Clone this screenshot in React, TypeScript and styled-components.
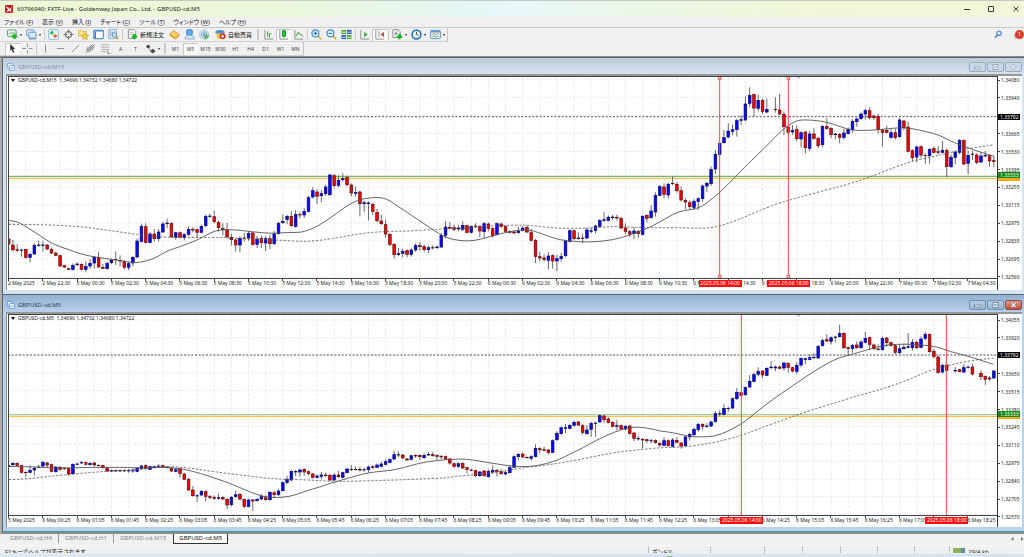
import React from "react";
import styled, { createGlobalStyle, css } from "styled-components";

/* ---------- chart data ---------- */

type Bar = { i: number; up: boolean; top: number; bottom: number; high: number; low: number };
type Point = [number, number];

const STEP = 12.85;
const PLOT_WIDTH = 2967;

/** Each record is "direction bodyTop bodyBottom high low"; "-" is a gap in trading. */
function readBars(first: number, base: number, text: string): Bar[] {
  const bars: Bar[] = [];
  text
    .trim()
    .split(/\s*,\s*/)
    .forEach((record, n) => {
      if (record === "-") return;
      const [dir, top, bottom, high, low] = record.split(" ");
      bars.push({
        i: first + n,
        up: dir === "b",
        top: Number(top) + base,
        bottom: Number(bottom) + base,
        high: Number(high) + base,
        low: Number(low) + base,
      });
    });
  return bars;
}

function readLine(dx: number, dy: number, text: string): Point[] {
  return text
    .trim()
    .split(/\s+/)
    .map((pair) => {
      const [x, y] = pair.split(",").map(Number);
      return [x + dx, y + dy] as Point;
    });
}

const m15Bars: Bar[] = [
  ...readBars(0, 372, `r 116 133 84 150, r 134 150 120 155, r 148 152 132 156, b 149 152 147 170, r 147 173 146 176, b 162 173 158 187, b 135 163 130 165, b 134 137 122 141, b 134 137 122 154, r 134 148 132 151, r 147 160 143 162, r 158 167 156 169, r 166 199 164 201, r 196 202 194 204, r 205 209 203 210, b 195 209 190 212, b 191 195 187 199, r 192 209 190 211, b 198 209 184 217, b 189 199 178 206, b 171 190 168 205, r 171 202 155 204, r 201 206 192 208, b 189 207 186 209, b 179 189 176 192, r 177 180 154 195, r 180 184 166 200, r 184 203 180 208, b 190 203 185 210, b 171 190 168 199, b 122 172 115 174, b 78 125 71 127, r 79 128 70 130, b 101 128 97 130, r 101 117 87 124, b 95 117 87 124, b 71 97 66 99, b 68 72 56 84, r 69 111 67 114, b 97 112 95 119, r 97 112 95 116, b 103 113 100 121, b 87 104 79 107, r 87 91 82 97, r 88 98 86 112, b 78 98 74 100, b 48 78 44 82, b 47 50 41 54, r 49 66 32 70, r 66 84 63 95, r 84 90 70 106, r 89 111 69 116, r 111 120 101 136, r 119 136 116 155, b 114 136 108 157, r 113 116 99 124, b 99 115 93 122, r 98 134 96 137, b 116 134 108 144, r 114 129 106 145, b 115 130 108 153, r 115 132 104 147, b 101 132 93 135, b 69 102 66 104, b 63 69 43 72, b 48 59 45 73, r 48 78 33 80, b 42 80 30 83, r 43 46 37 55, b 33 46 25 54, b -8 35 -12 37, b -29 -8 -38 -4, r -25 -10 -32 12, b -20 -12 -30 7, b -40 -18 -46 -12`),
  ...readBars(75, 252, `b 44 105 42 108, r 46 78 42 84, b 60 77 46 82, b 55 60 40 65, r 51 75 47 80, r 74 100 70 109, b 96 101 80 110, r 95 132 92 169, b 127 132 122 157, b 128 132 124 181, r 132 155 129 165, r 156 183 147 187, r 182 192 165 195, r 193 223 178 233, r 222 254 219 258, r 252 285 249 296, b 280 285 264 288, b 273 281 267 292, r 271 284 268 292, b 269 284 264 290, b 255 271 250 275, r 255 261 246 272, r 259 270 253 275, b 262 270 259 279, r 262 265 256 268, b 260 264 257 267, b 225 262 219 264, b 200 227 183 235, r 201 205 186 208, r 202 209 194 213, b 203 208 194 214, b 195 209 184 213, r 196 218 194 220, b 198 218 196 221, r 197 200 190 204, r 199 214 196 232, b 190 216 186 235, r 191 206 188 213, r 205 227 202 232, b 190 224 187 226, r 191 200 188 203, r 199 215 196 218, r 214 218 211 220, r 215 220 210 222, b 212 219 200 221, b 203 212 198 214, r 201 217 196 219, r 217 242 207 244, r 240 290 237 309, r 289 295 276 304, r 293 299 284 305, b 287 302 276 328, r 286 304 283 326, b 295 304 285 334, b 288 297 279 305, b 242 288 239 292, b 211 245 209 247, r 211 237 209 240, b 233 237 217 239, r 233 236 221 249, b 209 235 203 238, b 211 215 203 220, b 197 212 194 220, b 180 200 178 202, b 178 182 156 186, b 171 182 166 184, b 170 174 164 180, r 171 175 164 182, r 174 205 171 208, r 203 215 190 222, r 214 223 211 232, b 212 222 202 237, r 213 222 210 234, b 168 224 165 226, r 165 176 163 187, b 152 174 136 176, b 105 157 97 170, b 79 107 75 109, r 80 104 70 115, b 72 106 68 115, r 69 72 50 76, r 72 93 66 98, r 91 121 80 124, r 120 127 115 147, r 127 141 122 149, b 123 143 118 149, b 115 125 112 150, b 77 117 74 125, b 69 79 66 96, b 27 72 20 77`),
  ...readBars(165, -18, `b 252 298 240 312, b 219 254 216 256, b 202 219 180 221, b 182 202 160 205, b 178 185 164 196, b 151 180 146 200, b 148 152 136 165, b 101 151 79 153, b 75 101 52 111, r 73 115 71 139, b 90 116 74 124, r 90 125 86 132, b 117 127 86 130, -, r 117 120 82 128, r 119 133 72 135, r 132 171 124 196, r 170 188 165 192, b 180 187 165 194, r 178 207 166 214, b 187 208 184 232, r 185 234 183 251, b 191 236 183 243, r 191 206 175 209, r 204 228 201 234, b 168 225 165 231, r 168 176 145 180, r 174 195 172 204, b 191 195 189 208, r 192 203 189 220, b 188 203 176 209, b 177 191 172 194, b 153 180 148 188, b 146 156 142 170, b 131 147 127 150, b 121 133 117 148, r 121 144 112 148, r 137 144 134 150, r 138 180 131 189, r 179 188 177 230, r 180 188 167 190, b 187 203 177 207, r 187 204 176 209, b 149 201 144 203, r 152 174 150 181, r 170 245 155 247, r 241 264 238 274, b 230 262 226 276, r 229 256 226 263, r 255 258 250 281, b 237 258 235 281, r 235 248 230 250, r 244 248 228 254, b 240 248 213 250, r 240 291 235 321, b 261 291 254 294, b 245 263 242 283, b 210 248 207 253, r 210 283 208 285, b 255 281 242 313, r 251 254 242 270, r 254 278 250 283, b 257 277 247 279, b 255 259 243 262, r 256 274 254 291, r 271 275 257 292`),
];

const m15Fast: Point[] = [
  ...readLine(-24, 372, "26,61 48,63 70,75 110,100 155,131 200,147 245,163 290,172 335,178 380,185 405,189 440,183 470,172 500,153 540,140 590,121 620,105 645,92 680,88 720,91 790,99 830,100 860,97 905,98 940,85 975,65"),
  ...readLine(966, 252, "20,160 45,141 75,124 105,115 140,112 160,114 180,122 205,140 245,166 280,190 310,210 340,229 370,239 410,244 450,239 500,224 540,215 580,208 610,212 650,227 690,240 730,244 780,247 850,240 900,225 950,206"),
  ...readLine(1956, 252, "0,186 40,162 70,151 110,147 140,130 180,97 230,47"),
  ...readLine(1956, -18, "260,285 315,233 360,186 385,166 410,152 430,149 480,152 520,162 560,177 590,182 650,180 700,174 745,173 800,185 840,196 870,213 910,228 950,243 1000,258"),
];

const m15Slow: Point[] = [
  ...readLine(-24, 372, "26,73 130,74 200,77 260,82 310,89 360,96 410,103 460,110 510,112 560,113 640,112 690,113 740,117 800,119 850,121 910,125 960,121"),
  ...readLine(966, 252, "0,237 60,226 120,217 180,214 240,213 300,209 350,206 400,205 460,199 520,196 590,195 630,199 680,205 760,205 800,203 850,199 910,202 960,203"),
  ...readLine(1956, 252, "0,203 60,203 110,205 150,204 190,195 230,181 270,164 310,147 360,128 400,117 450,103 510,87 560,74 610,58 660,39 710,20"),
  ...readLine(1956, -18, "760,272 820,260 870,248 920,236 970,229 1000,225"),
];

const m5Bars: Bar[] = [
  ...readBars(0, 378, `b 76 81 72 83, b 69 75 66 78, r 69 77 67 79, r 76 98 74 100, r 96 99 94 111, b 90 98 76 100, b 84 91 80 107, b 80 82 74 84, b 66 79 63 82, r 68 76 66 83, r 73 95 71 97, b 80 96 78 98, r 81 89 78 92, r 84 87 82 90, r 85 103 83 107, b 72 102 70 104, b 71 74 67 76, b 67 70 63 72, r 67 74 65 76, b 69 75 67 77, r 68 76 66 79, r 75 78 73 79, r 76 84 74 86, r 83 94 81 96, b 91 94 89 96, r 91 93 88 96, b 91 93 88 96, r 91 93 88 96, b 91 93 88 98, b 91 93 85 98, b 83 95 81 97, b 77 87 75 89, r 76 86 73 89, b 79 89 77 90, b 79 83 77 85, b 77 80 73 82, r 76 80 74 83, r 80 84 78 85, r 84 94 82 96, b 88 95 84 97, r 85 101 83 112, r 101 119 99 121, r 117 151 114 153, r 149 168 138 170, b 166 169 163 186, b 153 166 150 168, r 154 170 151 184, r 169 173 165 177, r 171 176 166 179, b 172 176 161 179, r 171 178 169 180, r 177 196 174 207, b 171 195 168 199, b 163 171 152 175, r 162 178 160 181, r 177 200 176 203, b 179 201 176 202, r 179 184 177 213, b 177 183 174 185, b 169 178 162 180, r 172 180 165 182, b 156 180 154 182, r 157 165 154 174, b 152 165 147 168, b 127 153 124 154, b 117 128 108 132, b 93 121 91 123, b 93 97 90 108, b 89 97 86 110, r 87 97 85 108, r 94 102 92 105, r 101 113 99 115, b 107 113 103 115, b 104 110 96 118, r 104 108 98 110`),
  ...readBars(75, 258, `r 225 241 222 243, b 224 241 220 243, r 224 231 213 233, b 217 233 215 235, b 206 219 204 221, r 207 210 196 213, b 207 210 199 212, r 207 211 200 214, b 208 210 203 215, b 200 210 197 218, r 199 203 196 207, b 194 203 191 204, b 191 200 185 202, b 184 194 178 196, b 178 188 175 190, b 163 178 153 180, b 163 166 154 171, r 164 175 162 176, r 176 181 174 182, b 166 179 165 181, r 165 169 163 174, r 165 171 163 180, b 165 174 160 177, b 162 166 156 168, r 163 168 157 170, r 165 170 163 180, r 168 172 165 178, r 169 178 167 180, r 176 190 174 194, r 190 200 188 203, b 190 200 188 204, r 189 205 187 208, r 202 209 200 220, r 209 212 206 214, r 211 228 209 231, b 215 228 213 230, r 212 228 210 230, b 213 231 208 233, b 210 217 196 222, r 210 215 206 229, r 214 222 207 225, b 217 223 213 226, b 202 219 198 220, b 169 203 166 204, b 162 171 159 181, r 161 172 158 174, r 171 174 169 176, b 169 176 166 182, b 144 171 133 172, r 145 150 142 160, r 148 152 140 154, r 149 158 147 164, b 121 158 118 159, b 99 120 94 123, b 82 102 80 104, b 82 86 72 99, b 75 86 71 88, b 66 77 62 79, r 65 76 63 78, r 76 98 72 104, b 89 102 75 104, b 69 89 65 110, b 68 71 65 110, b 46 67 44 68, r 47 60 45 68, r 56 68 52 70, r 66 80 64 82, b 76 80 60 91, r 76 88 73 90, b 78 88 76 92, r 77 101 75 104, r 98 116 96 124, b 114 118 108 122, r 117 121 114 145, r 118 123 116 130, b 121 123 116 130, r 120 129 118 131, r 129 136 127 140`),
  ...readBars(153, 318, `b 61 77 52 79, r 61 78 58 80, b 59 80 54 82, r 60 68 52 70, r 68 79 66 86, b 50 78 48 80, b 42 52 39 62, b 27 45 23 48`),
  ...readBars(161, -57, `b 387 405 384 411, r 387 395 385 404, b 392 395 384 399, b 380 394 377 396, b 355 380 348 384, b 355 358 346 364, b 339 359 328 361, b 339 342 335 350, b 310 340 307 342, b 291 312 279 315, r 292 302 290 304, b 276 300 274 303, b 258 277 240 279, b 238 260 234 262, b 228 239 217 244, r 227 241 225 249, b 219 242 217 244, b 215 219 198 223, b 215 220 211 229, r 215 221 212 223, b 203 220 201 227, r 204 218 202 232, r 217 229 215 232, b 210 230 201 238, b 189 211 187 217, b 190 194 188 207, b 187 194 178 196, b 186 189 174 192, b 153 190 150 192, b 136 153 131 155, r 133 139 118 141, b 127 140 124 148, b 125 128 122 142, b 114 126 89 128, r 114 159 112 161, r 157 162 154 180, b 150 162 147 173, r 149 159 139 162, b 140 159 137 161, b 129 143 111 145, r 127 149 125 165, r 149 162 146 165, r 161 165 148 166, b 129 165 125 167, r 128 144 126 156, r 142 152 140 155, r 151 173 149 178, b 160 174 150 177, b 156 162 145 164, b 154 158 114 160, b 141 159 132 166, r 141 159 136 162, b 131 158 124 160, b 117 131 110 136, r 117 171 115 173, r 168 185 162 190, r 185 234 182 236, b 210 232 206 236, r 209 227 207 229, -, b 225 229 216 232, r 223 231 221 232, b 217 232 206 234, b 215 218 212 220, r 215 238 206 242, -, r 234 246 226 256, r 243 254 241 269, r 248 253 243 257, b 227 250 225 251`),
];

const m5Fast: Point[] = [
  ...readLine(-24, 378, "26,79 80,80 150,83 210,84 270,82 330,82 385,82 430,85 470,82 520,83 560,89 600,100 650,116 700,134 750,156 780,167 810,173 850,172 880,167 920,152 960,141"),
  ...readLine(966, 258, "0,250 50,236 100,221 140,215 180,212 220,203 265,190 320,181 390,176 430,180 470,187 520,195 560,200 610,199 650,191 685,180 720,162 760,143 800,120 840,102 870,90 905,81 940,82 980,90"),
  ...readLine(1956, -57, "0,408 35,412 80,423 110,426 160,425 200,411 250,384 290,350 340,312 390,278 440,243 490,212 530,190 580,177 630,162 680,149 740,147 790,150 830,155 870,170 920,182 960,195 1000,208"),
];

const m5Slow: Point[] = [
  ...readLine(-24, 378, "26,119 70,118 120,112 170,107 230,101 290,96 350,92 420,88 470,81 520,80 570,84 620,92 680,100 740,107 800,115 860,118 930,120"),
  ...readLine(966, 258, "0,244 60,244 130,242 200,240 270,237 330,235 380,229 430,224 480,219 530,212 570,204 630,198 690,189 750,178 810,166 870,155 930,149"),
  ...readLine(1956, -57, "0,458 60,457 120,450 170,441 240,423 300,400 360,378 420,357 480,337 540,319 600,300 660,284 720,264 760,248 800,230 850,215 900,203 950,194 1000,190"),
];

const pad = (n: number) => String(n).padStart(2, "0");

const m15Times = [
  "2 May 2025",
  "2 May 22:30",
  ...Array.from({ length: 12 }, (_, n) => `5 May ${pad(n * 2)}:30`),
  ...Array.from({ length: 12 }, (_, n) => `6 May ${pad(n * 2)}:30`),
  ...Array.from({ length: 3 }, (_, n) => `7 May ${pad(n * 2)}:30`),
];

const m5Times = [
  "5 May 2025",
  ...Array.from({ length: 28 }, (_, n) => {
    const minutes = 25 + n * 40;
    return `6 May ${pad(Math.floor(minutes / 60))}:${pad(minutes % 60)}`;
  }),
];

/* ---------- styles ---------- */

const GlobalStyle = createGlobalStyle`
  * { box-sizing: border-box; }
  body {
    margin: 0;
    background: #dce7f2;
    color: #222;
    font-family: "Noto Sans", "Noto Sans CJK JP", sans-serif;
    font-size: 6px;
    overflow: hidden;
  }
  button { font: inherit; color: inherit; border: 0; background: none; padding: 0; margin: 0; }
`;

const Page = styled.div`
  display: flex;
  flex-direction: column;
  min-height: 100vh;
`;

const AppTitle = styled.header`
  display: flex;
  align-items: center;
  height: 17px;
  padding-left: 5px;
  border-top: 1px solid #c6c8c4;
  background: linear-gradient(90deg, #edf8d3 0%, #eaf7da 28%, #e4f6f5 46%, #e8f7fa 50%, #eaf7e6 62%, #f1f7d6 80%, #f1f7d8 100%);
`;

const AppName = styled.h1`
  flex: 1;
  margin: 0 0 0 4px;
  font-size: 6px;
  line-height: 10px;
  font-weight: 400;
  color: #1c1c1c;
`;

const CaptionButton = styled.button`
  display: grid;
  place-items: center;
  width: 24px;
  height: 16px;
  &:last-child { width: 21px; justify-items: end; padding-right: 5px; }
`;

const MenuBar = styled.nav`
  display: flex;
  align-items: center;
  gap: 9px;
  height: 10px;
  padding-left: 4px;
  background: #f0f0f0;
  font-feature-settings: "palt";
`;

const MenuItem = styled.button`
  line-height: 10px;
  white-space: nowrap;
  color: #222;
  u { text-underline-offset: 1px; text-decoration-thickness: 1px; text-decoration-color: #999; }
`;

const ToolArea = styled.div`
  display: flex;
  background: #f0f0f0;
  border-top: 1px solid #c9c9c9;
  border-bottom: 1px solid #8c8c8c;
`;

const ToolRows = styled.div`
  flex: 1;
`;

const ToolBar = styled.div`
  display: flex;
  align-items: center;
  width: max-content;
  height: 14px;
  padding-left: 5px;
  border-right: 1px solid #c4c4c4;
  border-bottom: 1px solid #d2d2d2;
`;

const ToolButton = styled.button<{ $wide?: boolean; $on?: boolean }>`
  display: flex;
  align-items: center;
  justify-content: center;
  gap: 2px;
  width: ${(p) => (p.$wide ? 19 : 15)}px;
  height: 12px;
  font-size: 5px;
  color: #444;
  ${(p) =>
    p.$on &&
    css`
      background: #fafafa;
      box-shadow: inset 1px 1px 0 #c8c8c8;
    `}
`;

const LabelButton = styled.button`
  display: flex;
  align-items: center;
  gap: 2px;
  height: 12px;
  padding: 0 3px;
  font-size: 6px;
  white-space: nowrap;
  color: #111;
`;

const Caret = styled.span`
  border: 1px solid transparent;
  border-top: 2px solid #222;
  border-bottom: 0;
`;

const Divider = styled.span<{ $grip?: boolean }>`
  width: ${(p) => (p.$grip ? 2 : 1)}px;
  height: 11px;
  margin: 0 ${(p) => (p.$grip ? 2 : 1)}px;
  background: #cacaca;
`;

const ToolRight = styled.div`
  display: flex;
  align-items: flex-start;
  gap: 8px;
  padding-top: 2px;
`;

const AlertButton = styled.button`
  position: relative;
  width: 14px;
  height: 12px;
`;

const AlertCount = styled.span`
  position: absolute;
  top: 0;
  right: 0;
  width: 9px;
  height: 9px;
  border-radius: 5px;
  background: #dc3a28;
  color: #fff;
  font-size: 6px;
  line-height: 9px;
  text-align: center;
`;

const Workspace = styled.main`
  border-top: 1px solid #5f6468;
  border-left: 2px solid #adadad;
  border-bottom: 2px solid #8b8b8b;
`;

const ChartWindow = styled.section<{ $active?: boolean }>`
  border-left: 1px solid #5d656c;
  background: ${(p) => (p.$active ? "#b9d1ea" : "#d6e3f1")};
  padding: 0 2px 4px 3px;
  ${(p) =>
    p.$active &&
    css`
      border-top: 1px solid #5d656c;
      border-bottom: 1px solid #3d98b5;
    `}
`;

const WindowTitle = styled.div<{ $active?: boolean }>`
  display: flex;
  align-items: center;
  height: ${(p) => (p.$active ? 17 : 16)}px;
  margin: 0 -2px 0 -3px;
  padding: 3px 2px 1px 4px;
  color: ${(p) => (p.$active ? "#2b3d52" : "#8594a3")};
  background: ${(p) =>
    p.$active ? "linear-gradient(#94b0d0, #b9d1eb)" : "linear-gradient(#bccbda, #d6e2ee)"};
`;

const WindowName = styled.h2`
  flex: 1;
  margin: 0 0 0 3px;
  font-size: 6px;
  line-height: 10px;
  font-weight: 400;
`;

const WindowButton = styled.button<{ $tone: "idle" | "blue" | "red" }>`
  display: grid;
  place-items: center;
  width: 17px;
  height: 10px;
  margin-left: 1px;
  border: 1px solid ${(p) => ({ idle: "#9aabbd", blue: "#6f8cad", red: "#8c4a45" })[p.$tone]};
  border-radius: 2px;
  background: ${(p) =>
    ({
      idle: "#c9d8e7",
      blue: "linear-gradient(#b9cde3, #98b5d5)",
      red: "linear-gradient(#dd9c8d, #c2503b)",
    })[p.$tone]};
`;

const ChartFrame = styled.div`
  display: grid;
  grid-template-columns: minmax(0, 1fr) 25px;
  padding-left: 1px;
  border-top: 2px solid #979797;
  border-left: 1px solid #8e8e8e;
  background: #fff;
`;

const PlotCell = styled.div`
  position: relative;
`;

const PlotSvg = styled.svg<{ $height: number }>`
  display: block;
  width: 100%;
  height: ${(p) => p.$height}px;
`;

const PlotCaption = styled.div`
  position: absolute;
  top: 0;
  left: 3px;
  display: flex;
  align-items: center;
  gap: 3px;
  line-height: 9px;
  font-size: 5px;
  color: #1a1a1a;
  white-space: pre;
`;

const CaptionArrow = styled.span`
  border: 2px solid transparent;
  border-top: 3px solid #111;
  border-bottom: 0;
`;

const PriceAxis = styled.div<{ $offset: number }>`
  position: relative;
  border-left: 1px solid #333;
  padding-top: ${(p) => p.$offset}px;
`;

const PriceList = styled.div`
  display: flex;
  flex-direction: column;
  justify-content: space-between;
  height: 205px;
  margin-bottom: -8px;
`;

const Price = styled.span`
  display: flex;
  align-items: center;
  gap: 1px;
  font-size: 5px;
  line-height: 8px;
  color: #222;
  &::before { content: ""; width: 2px; height: 1px; background: #444; }
`;

const PriceTag = styled.span<{ $top: number; $color: string }>`
  position: absolute;
  top: ${(p) => p.$top}px;
  left: 0;
  width: 22px;
  height: 6px;
  padding-left: 2px;
  background: ${(p) => p.$color};
  color: #fff;
  font-size: 5px;
  line-height: 6px;
`;

const TimeAxis = styled.div`
  position: relative;
  display: flex;
  height: 11px;
  overflow: hidden;
`;

const Time = styled.span`
  flex: 0 0 calc(100% * 8 / 230.9);
  font-size: 5px;
  line-height: 9px;
  white-space: nowrap;
  color: #222;
  background: linear-gradient(#444, #444) 0 0 / 1px 2px no-repeat;
`;

const TimeTag = styled.span<{ $at: number }>`
  position: absolute;
  top: 1px;
  left: ${(p) => p.$at}%;
  width: 43px;
  margin-left: -21px;
  height: 7px;
  background: #fb0d0d;
  color: #fff;
  font-size: 5px;
  line-height: 7px;
  text-align: center;
  white-space: nowrap;
`;

const TabBar = styled.div`
  display: flex;
  align-items: flex-start;
  height: 11px;
  padding-left: 4px;
  background: #f0f0f0;
`;

const Tab = styled.button<{ $on?: boolean; $line?: boolean }>`
  height: 9px;
  padding: 0 6px;
  line-height: 9px;
  color: #888;
  border-right: 1px solid ${(p) => (p.$line ? "#999" : "transparent")};
  ${(p) =>
    p.$on &&
    css`
      height: 10px;
      padding: 0 5px;
      color: #111;
      background: #fff;
      border: 1px solid #333;
      border-top: 0;
    `}
`;

const TabArrows = styled.div`
  display: flex;
  gap: 6px;
  margin-left: auto;
`;

const ArrowButton = styled.button`
  width: 4px;
  height: 9px;
  display: grid;
  place-items: center;
`;

const StatusBar = styled.footer`
  display: flex;
  height: 8px;
  padding-left: 2px;
  border-top: 1px solid #fafafa;
  background: #f0f0f0;
  overflow: hidden;
  font-feature-settings: "palt";
`;

const StatusCell = styled.span<{ $width?: number }>`
  ${(p) => (p.$width ? `flex: 0 0 ${p.$width}px;` : "flex: 1;")}
  display: flex;
  gap: 2px;
  padding-left: 3px;
  line-height: 8px;
  padding-top: 2px;
  white-space: nowrap;
  & + & { border-left: 1px solid #c0c0c0; }
`;

const TaskStrip = styled.div`
  flex: 1;
  min-height: 4px;
  padding-left: 65%;
  overflow: hidden;
  border-top: 1px solid #e9eff6;
  background: linear-gradient(90deg, #dbeaf3, #d6e2f0);
`;

const TaskDot = styled.span`
  display: block;
  width: 8px;
  height: 8px;
  margin: 2px 0 0 0;
  border-radius: 4px;
  background: #7aae4c;
`;

/* ---------- icons ---------- */

const Glyph = ({ children, size = 11 }: { children: React.ReactNode; size?: number }) => (
  <svg width={size} height={size} viewBox="0 0 12 12" fill="none" aria-hidden="true">
    {children}
  </svg>
);

const Plus = ({ x, y }: { x: number; y: number }) => (
  <path d={`M${x} ${y - 3}v6M${x - 3} ${y}h6`} stroke="#14b81e" strokeWidth="2.4" />
);

const icons: Record<string, React.ReactNode> = {
  newChart: (<><rect x="0.5" y="1" width="9.5" height="7" rx="1" fill="#eafbea" stroke="#5b8f76" /><path d="M2 6l2-2 2 1 2-2" stroke="#57a070" /><Plus x={8.2} y={8} /></>),
  profiles: (<><rect x="0.7" y="1" width="8" height="6.5" rx="1" fill="#eaf3fc" stroke="#5f94c5" /><rect x="3" y="3.5" width="8" height="6.5" rx="1" fill="#d5e8fa" stroke="#5f94c5" /><path d="M3 10.8h8" stroke="#4a80b5" /></>),
  market: (<><rect x="0.7" y="0.7" width="10.6" height="10.6" rx="1" fill="#f4fbff" stroke="#7fb3d8" /><circle cx="4.2" cy="4.2" r="2" fill="#22b24c" /><circle cx="7.8" cy="7.6" r="2" fill="#f05a38" /></>),
  target: (<><circle cx="6" cy="6" r="3.3" stroke="#777" strokeWidth="1.2" /><path d="M6 0.5v4M6 7.5v4M0.5 6h4M7.5 6h4" stroke="#777" strokeWidth="1.2" /></>),
  navigator: (<><path d="M0.5 1.500h3.500l1 1H9v5H0.500z" fill="#fbe38b" stroke="#d4a93c" strokeWidth=".8" /><path d="M7.500 4l1.200 2.500 2.800.3-2 2 .5 2.700-2.500-1.300L5 11.500l.5-2.700-2-2 2.800-.3z" fill="#f9d23a" stroke="#c79a24" strokeWidth=".7" /></>),
  terminal: (<><rect x="0.7" y="1.5" width="10.6" height="9" rx="1" fill="#fafdff" stroke="#4f8ecb" strokeWidth="1.2" /><path d="M1 2.200h10" stroke="#4f8ecb" strokeWidth="1.2" /><path d="M2.500 3v7" stroke="#3f74b5" strokeWidth="1.600" /></>),
  tester: (<><rect x="1" y="0.7" width="8.5" height="9.5" fill="#eaf4fd" stroke="#7fabd0" /><path d="M3 2v6M5 3v5M7 2v4" stroke="#6f9bc6" /><circle cx="7" cy="6.500" r="2.400" fill="#d7ecfb" stroke="#5d87b0" /><path d="M8.800 8.300l2.400 2.600" stroke="#d5a22f" strokeWidth="1.800" /></>),
  order: (<><path d="M1.500 0.700h6l2 2v7.600h-8z" fill="#fff" stroke="#888" /><path d="M3 4h4M3 6h3" stroke="#999" strokeWidth=".8" /><Plus x={8} y={8.300} /></>),
  meta: (<><path d="M0.700 5.500L5 1.500l6.300 4.500-4.300 4z" fill="#fbd06a" stroke="#c68b1a" strokeWidth=".8" /><path d="M0.700 5.500L7 10l4.300-4v1.500L7 11.500 0.700 7z" fill="#d9931c" /></>),
  account: (<><rect x="3" y="0.800" width="6" height="6" rx="1.500" fill="#5aaef0" stroke="#2c7cc6" /><path d="M1 10.800c0-3 2-4 5-4s5 1 5 4z" fill="#d8e9f8" stroke="#7ba6cf" /></>),
  signal: (<><circle cx="5.500" cy="6" r="5" stroke="#a8c7dd" /><circle cx="5.500" cy="6" r="3" stroke="#6fa8cf" strokeWidth="1.200" /><circle cx="5.500" cy="6" r="1.300" fill="#4a8fc8" /><path d="M6 6v5.500c3 0 5-2 5-5z" fill="#56b55e" opacity=".85" /></>),
  auto: (<><ellipse cx="5.500" cy="3.600" rx="5" ry="2.400" fill="#4a90d9" /><path d="M1 5h9l-1.500 6h-6z" fill="#f3c848" /><circle cx="8.300" cy="8" r="3.300" fill="#e02f1c" /><rect x="7" y="6.700" width="2.600" height="2.600" fill="#fff" /></>),
  bars: (<><path d="M2 1v10h9" stroke="#888" /><path d="M5 2.500v6M4 5h1M7 4.500v5M7 5h2" stroke="#4dae55" strokeWidth="1.200" /></>),
  candles: (<><path d="M2 1v10h9" stroke="#888" /><path d="M6.500 0.500v9" stroke="#119a22" /><rect x="4.800" y="2.200" width="3.400" height="5.600" fill="#20cc33" stroke="#119a22" /></>),
  line: (<><path d="M2 1v10h9" stroke="#888" /><path d="M3 8l2.500-4 2 1.500L11 8" stroke="#4dae55" strokeWidth="1.200" /></>),
  zoomIn: (<><path d="M7.200 7.200l4 4" stroke="#dcb43e" strokeWidth="2" /><circle cx="4.800" cy="4.800" r="3.800" fill="#dff0fd" stroke="#3f8ad0" strokeWidth="1.300" /><path d="M3 4.800h3.600M4.800 3v3.600" stroke="#2d6fb5" strokeWidth="1.200" /></>),
  zoomOut: (<><path d="M7.200 7.200l4 4" stroke="#dcb43e" strokeWidth="2" /><circle cx="4.800" cy="4.800" r="3.800" fill="#dff0fd" stroke="#3f8ad0" strokeWidth="1.300" /><path d="M3 4.800h3.600" stroke="#2d6fb5" strokeWidth="1.200" /></>),
  tile: (<><rect x="0.500" y="1" width="5" height="4.500" fill="#58a93a" /><rect x="6.500" y="1" width="5" height="4.500" fill="#2f63b8" /><rect x="0.500" y="6.500" width="5" height="4.500" fill="#2f63b8" /><rect x="6.500" y="6.500" width="5" height="4.500" fill="#58a93a" /><path d="M1 3.500h4M7 3.500h4M1 9h4M7 9h4" stroke="#dff0e0" /></>),
  scroll: (<><path d="M2 1v10h9" stroke="#888" /><path d="M5.500 3l4 3-4 3z" fill="#3fae48" /></>),
  shift: (<><path d="M2 1v10h9M5.500 2v7" stroke="#888" /><path d="M11 3l-4 3 4 3z" fill="#b3563c" /></>),
  indicator: (<><path d="M1 0.700h6l2 2v6.600H1z" fill="#f5f5f5" stroke="#888" /><path d="M3 7c1 0 1-4.500 3-4.500M3 5h3" stroke="#777" /><Plus x={8.200} y={8.300} /></>),
  period: (<><circle cx="6" cy="6" r="4.800" fill="#eef6fe" stroke="#2b78c8" strokeWidth="1.800" /><path d="M6 3.200V6l2 1" stroke="#444" /></>),
  template: (<><rect x="0.700" y="1.500" width="10.600" height="9" rx="1" fill="#eef6fe" stroke="#4f8ecb" /><path d="M1 3h10" stroke="#4f8ecb" strokeWidth="1.500" /><path d="M2.500 6l2-1 2 1 3-1.500" stroke="#c97c58" /><path d="M2.500 8.500l2-1 2 1 3-1" stroke="#54a865" /></>),
  cursor: <path d="M3.500 1l5.500 5.500H6.600l1.400 3.500-1.500.6-1.400-3.500-1.600 1.500z" fill="#333" />,
  cross: <path d="M6 0.500v4M6 7.500v4M0.500 6h4M7.500 6h4" stroke="#888" />,
  vline: <path d="M6 1.500v9" stroke="#888" />,
  hline: <path d="M2 6h8" stroke="#888" />,
  trend: <path d="M2 10l8-8" stroke="#888" />,
  channel: (<><path d="M1 8l7-6M3.500 10l7-6M1 10.500l9.500-9" stroke="#777" /><path d="M3 4v6M5.500 3v6M8 2.500v6" stroke="#888" strokeWidth=".8" /></>),
  fibo: (<><path d="M1 2h9M1 4.500h9M1 7h9M1 9.500h6" stroke="#aaa" /><path d="M8.500 8v3.500h2.500" stroke="#777" strokeWidth=".9" /></>),
  arrows: (<><path d="M1 4l2.500-2.500L6 4 3.500 6z" fill="#444" /><path d="M4 6l2.500 2.500M6 9l2.500-2.500 2.500 2.500-2.500 2z" fill="#444" stroke="#444" strokeWidth=".8" /></>),
};

const WindowIcon = ({ active }: { active?: boolean }) => (
  <svg width="8" height="8" viewBox="0 0 12 12" fill="none" opacity={active ? 1 : 0.75} aria-hidden="true">
    <rect x="0.600" y="0.600" width="8" height="7" rx="1" fill="#eaf4ff" stroke="#4d8cd6" strokeWidth="1.200" />
    <rect x="3.400" y="4" width="8" height="7" rx="1" fill="#fff" stroke="#4d8cd6" strokeWidth="1.200" />
    <path d="M5 9l1.500-2 1.500 1.500L10 6" stroke="#4d8cd6" />
  </svg>
);

/* ---------- chart ---------- */

type ChartProps = {
  caption: string;
  height: number;
  bars: Bar[];
  fast: Point[];
  slow: Point[];
  rows: number[];
  bid: number;
  green: number;
  greenColor: string;
  orange: number;
  marks: number[];
  handles?: boolean;
  times: string[];
  tags: string[];
  prices: string[];
  axisOffset: number;
};

function smooth(points: Point[]) {
  let d = `M${points[0][0]} ${points[0][1]}`;
  for (let n = 1; n < points.length - 1; n++) {
    const [x, y] = points[n];
    const [nx, ny] = points[n + 1];
    d += `Q${x} ${y} ${(x + nx) / 2} ${(y + ny) / 2}`;
  }
  const last = points[points.length - 1];
  return `${d}L${last[0]} ${last[1]}`;
}

function Chart(p: ChartProps) {
  const h = p.height * 3;
  return (
    <ChartFrame>
      <PlotCell>
        <PlotSvg $height={p.height} viewBox={`0 0 ${PLOT_WIDTH} ${h}`} preserveAspectRatio="none" role="img" aria-label={p.caption}>
          <g stroke="#e4e4f4" strokeWidth="2.500" strokeDasharray="9 5">
            {Array.from({ length: 57 }, (_, n) => (
              <path key={n} d={`M${2 + (n + 1) * 4 * STEP} 0V${h}`} />
            ))}
            {p.rows.map((y) => (
              <path key={y} d={`M0 ${y}H${PLOT_WIDTH}`} />
            ))}
          </g>
          <path d={`M0 ${p.green}H${PLOT_WIDTH}`} stroke={p.greenColor} strokeWidth="3.500" />
          <path d={`M0 ${p.orange}H${PLOT_WIDTH}`} stroke="#fcc04c" strokeWidth="3.500" />
          <path d={`M0 ${p.bid}H${PLOT_WIDTH}`} stroke="#555" strokeWidth="3" strokeDasharray="6 5" />
          {p.bars.map((bar) => {
            const x = 2 + bar.i * STEP;
            return (
              <g key={bar.i}>
                <path d={`M${x} ${bar.high}V${bar.low}`} stroke="#333" strokeWidth="2.200" />
                <rect
                  x={x - 4}
                  y={bar.top + 1}
                  width="8"
                  height={Math.max(bar.bottom - bar.top - 2, 1)}
                  fill={bar.up ? "#0808f4" : "#ee0404"}
                  stroke={bar.up ? "#0a0a70" : "#650a0a"}
                  strokeWidth="2"
                />
              </g>
            );
          })}
          <path d={smooth(p.slow)} fill="none" stroke="#555" strokeWidth="2.500" strokeDasharray="7 5" />
          <path d={smooth(p.fast)} fill="none" stroke="#555" strokeWidth="2.700" />
          {p.marks.map((x) => (
            <g key={x} stroke="#f94848" strokeWidth="3" fill="none">
              <path d={`M${x} 0V${h}`} />
              {p.handles && <path d={`M${x - 4} 3h8v7h-8zM${x - 4} ${h - 11}h8v7h-8z`} fill="#fff" />}
            </g>
          ))}
          <path d="M2366 3h12l-6 5z" fill="#b7b7e6" />
          <path d={`M0 1.500H${PLOT_WIDTH}M1.500 0V${h}M0 ${h - 1.5}H${PLOT_WIDTH}`} stroke="#444" strokeWidth="3" />
        </PlotSvg>
        <PlotCaption>
          <CaptionArrow />
          {p.caption}
        </PlotCaption>
        <TimeAxis>
          {p.times.map((time) => (
            <Time key={time}>{time}</Time>
          ))}
          {p.marks.map((x, n) => (
            <TimeTag key={x} $at={(x / PLOT_WIDTH) * 100}>
              {p.tags[n]}
            </TimeTag>
          ))}
        </TimeAxis>
      </PlotCell>
      <PriceAxis $offset={p.axisOffset}>
        <PriceList>
          {p.prices.map((price) => (
            <Price key={price}>{price}</Price>
          ))}
        </PriceList>
        <PriceTag $top={Math.round(p.bid / 3) - 3} $color="#000">1.33792</PriceTag>
        <PriceTag $top={Math.round(p.orange / 3) - 3} $color="#fba91c" />
        <PriceTag $top={Math.round(p.green / 3) - 4} $color="#118a11">1.33333</PriceTag>
      </PriceAxis>
    </ChartFrame>
  );
}

const range = (first: number, step: number) => Array.from({ length: 12 }, (_, n) => Math.round(first + n * step));

/* ---------- page ---------- */

const menus: [string, string][] = [
  ["ファイル", "F"], ["表示", "V"], ["挿入", "I"], ["チャート", "C"], ["ツール", "T"], ["ウィンドウ", "W"], ["ヘルプ", "H"],
];

function Tool({ icon, name, on, menu, text }: { icon?: string; name: string; on?: boolean; menu?: boolean; text?: string }) {
  return (
    <ToolButton $on={on} $wide={menu} aria-label={name} title={name} aria-pressed={on}>
      {icon && <Glyph>{icons[icon]}</Glyph>}
      {text}
      {menu && <Caret />}
    </ToolButton>
  );
}

function WindowControls({ active }: { active?: boolean }) {
  const ink = active ? "#f2f6fb" : "#eef3f8";
  const edge = active ? "#62778e" : "#8496a8";
  return (
    <>
      <WindowButton $tone={active ? "blue" : "idle"} aria-label="最小化">
        <svg width="7" height="6"><rect x="0.500" y="3" width="6" height="2" fill={ink} stroke={edge} strokeWidth=".7" /></svg>
      </WindowButton>
      <WindowButton $tone={active ? "blue" : "idle"} aria-label="最大化">
        <svg width="7" height="6"><rect x="1" y="0.500" width="5" height="5" fill={ink} stroke={edge} strokeWidth=".8" /><rect x="2.500" y="2.200" width="2" height="1.500" fill={edge} /></svg>
      </WindowButton>
      <WindowButton $tone={active ? "red" : "idle"} aria-label="閉じる">
        <svg width="7" height="6"><path d="M1.500 1l4 4M5.500 1l-4 4" stroke={edge} strokeWidth="2.200" /><path d="M1.500 1l4 4M5.500 1l-4 4" stroke={ink} strokeWidth="1.200" /></svg>
      </WindowButton>
    </>
  );
}

export default function App() {
  return (
    <Page lang="ja">
      <GlobalStyle />
      <AppTitle>
        <svg width="8" height="8" viewBox="0 0 8 8" aria-hidden="true">
          <rect width="8" height="8" rx="1" fill="#c91a22" />
          <path d="M0.500 1.500L3 2l1.500 2 2.500-2-1.500 3 2 2-3-1-3 1.500 1.500-3z" fill="#fff" />
        </svg>
        <AppName>60796940: FXTF-Live - Goldenway Japan Co., Ltd. - GBPUSD-cd,M5</AppName>
        <CaptionButton aria-label="最小化">
          <svg width="6" height="6"><path d="M0 3.500h6" stroke="#333" /></svg>
        </CaptionButton>
        <CaptionButton aria-label="最大化">
          <svg width="6" height="6"><rect x="0.500" y="0.500" width="5" height="5" rx=".5" fill="none" stroke="#333" /></svg>
        </CaptionButton>
        <CaptionButton aria-label="閉じる">
          <svg width="6" height="6"><path d="M0.500 0.500l5 5M5.500 0.500l-5 5" stroke="#333" strokeWidth=".9" /></svg>
        </CaptionButton>
      </AppTitle>

      <MenuBar>
        {menus.map(([label, key]) => (
          <MenuItem key={key}>{label} (<u>{key}</u>)</MenuItem>
        ))}
      </MenuBar>

      <ToolArea>
        <ToolRows>
          <ToolBar role="toolbar" aria-label="標準">
            <Tool icon="newChart" name="新規チャート" menu />
            <Tool icon="profiles" name="組表示" menu />
            <Divider />
            <Tool icon="market" name="気配値表示" />
            <Tool icon="target" name="データウィンドウ" />
            <Tool icon="navigator" name="ナビゲーター" />
            <Tool icon="terminal" name="ターミナル" />
            <Tool icon="tester" name="ストラテジーテスター" />
            <Divider />
            <LabelButton><Glyph>{icons.order}</Glyph>新規注文</LabelButton>
            <Tool icon="meta" name="メタエディター" />
            <Tool icon="account" name="口座" />
            <Tool icon="signal" name="シグナル" />
            <LabelButton><Glyph>{icons.auto}</Glyph>自動売買</LabelButton>
            <Divider $grip />
            <Tool icon="bars" name="バーチャート" />
            <Tool icon="candles" name="ローソク足" on />
            <Tool icon="line" name="ラインチャート" />
            <Divider />
            <Tool icon="zoomIn" name="拡大" />
            <Tool icon="zoomOut" name="縮小" />
            <Tool icon="tile" name="整列" />
            <Divider />
            <Tool icon="scroll" name="自動スクロール" />
            <Tool icon="shift" name="チャートシフト" on />
            <Divider />
            <Tool icon="indicator" name="インディケータ" menu />
            <Tool icon="period" name="時間足設定" menu />
            <Tool icon="template" name="定型チャート" menu />
          </ToolBar>
          <ToolBar role="toolbar" aria-label="ライン等">
            <Tool icon="cursor" name="カーソル" on />
            <Tool icon="cross" name="クロスヘア" />
            <Divider />
            <Tool icon="vline" name="垂直線" />
            <Tool icon="hline" name="水平線" />
            <Tool icon="trend" name="トレンドライン" />
            <Tool icon="channel" name="チャネル" />
            <Tool icon="fibo" name="フィボナッチ" />
            <Tool name="テキスト" text="A" />
            <Tool name="ラベル" text="T" />
            <Tool icon="arrows" name="矢印" menu />
            <Divider $grip />
            {["M1", "M5", "M15", "M30", "H1", "H4", "D1", "W1", "MN"].map((period) => (
              <Tool key={period} name={period} text={period} on={period === "M5"} />
            ))}
          </ToolBar>
        </ToolRows>
        <ToolRight>
          <button aria-label="検索">
            <svg width="8" height="9" viewBox="0 0 8 9" fill="none">
              <circle cx="5" cy="3.200" r="2.200" fill="#eaf3ff" stroke="#4a7fd8" strokeWidth="1.200" />
              <path d="M3.300 4.900L1 7.800" stroke="#4a7fd8" strokeWidth="1.600" />
            </svg>
          </button>
          <AlertButton aria-label="通知">
            <svg width="9" height="9" viewBox="0 0 9 9"><path d="M1 3h7v4H4L2 9V7H1z" fill="#c8c8c8" /></svg>
            <AlertCount>1</AlertCount>
          </AlertButton>
        </ToolRight>
      </ToolArea>

      <Workspace>
        <ChartWindow>
          <WindowTitle>
            <WindowIcon />
            <WindowName>GBPUSD-cd,M15</WindowName>
            <WindowControls />
          </WindowTitle>
          <Chart
            caption="GBPUSD-cd,M15  1.34696 1.34732 1.34680 1.34722"
            height={203}
            bars={m15Bars}
            fast={m15Fast}
            slow={m15Slow}
            rows={range(10, 53.9)}
            bid={122}
            green={301}
            greenColor="#6fbb6f"
            orange={307}
            marks={[2135, 2341]}
            handles
            times={m15Times}
            tags={["2025.05.06 14:00", "2025.05.06 18:00"]}
            prices={["1.34080", "1.33940", "1.33800", "1.33665", "1.33530", "1.33395", "1.33255", "1.33115", "1.32975", "1.32835", "1.32695", "1.32560"]}
            axisOffset={0}
          />
        </ChartWindow>
        <ChartWindow $active>
          <WindowTitle $active>
            <WindowIcon active />
            <WindowName>GBPUSD-cd,M5</WindowName>
            <WindowControls active />
          </WindowTitle>
          <Chart
            caption="GBPUSD-cd,M5  1.34696 1.34732 1.34680 1.34722"
            height={202}
            bars={m5Bars}
            fast={m5Fast}
            slow={m5Slow}
            rows={range(18, 53)}
            bid={123}
            green={302}
            greenColor="#9fd09f"
            orange={307}
            marks={[2200, 2815]}
            times={m5Times}
            tags={["2025.05.06 14:00", "2025.05.06 18:00"]}
            prices={["1.34055", "1.33920", "1.33785", "1.33650", "1.33515", "1.33380", "1.33245", "1.33110", "1.32975", "1.32840", "1.32705", "1.32570"]}
            axisOffset={2}
          />
        </ChartWindow>
      </Workspace>

      <TabBar>
        <Tab $line>GBPUSD-cd,H4</Tab>
        <Tab $line>GBPUSD-cd,H1</Tab>
        <Tab>GBPUSD-cd,M15</Tab>
        <Tab $on>GBPUSD-cd,M5</Tab>
        <TabArrows>
          <ArrowButton aria-label="前へ"><svg width="3" height="4"><path d="M2.500 0L0 2l2.500 2z" fill="#777" /></svg></ArrowButton>
          <ArrowButton aria-label="次へ"><svg width="3" height="4"><path d="M0 0l2.500 2L0 4z" fill="#777" /></svg></ArrowButton>
        </TabArrows>
      </TabBar>

      <StatusBar>
        <StatusCell>F1キーでヘルプが表示されます</StatusCell>
        <StatusCell $width={62}>ポンドル</StatusCell>
        <StatusCell $width={54} />
        <StatusCell $width={38} />
        <StatusCell $width={38} />
        <StatusCell $width={37} />
        <StatusCell $width={37} />
        <StatusCell $width={35} />
        <StatusCell $width={75}>
          <svg width="13" height="6" aria-hidden="true">
            <path d="M1 0v6M3 0v6M5 0v6M7 0v6" stroke="#6f9a2c" strokeWidth="1.500" />
            <path d="M9 0v6M11 0v6" stroke="#2f6f8c" strokeWidth="1.500" />
          </svg>
          29/4 kb
        </StatusCell>
      </StatusBar>
      <TaskStrip><TaskDot /></TaskStrip>
    </Page>
  );
}
